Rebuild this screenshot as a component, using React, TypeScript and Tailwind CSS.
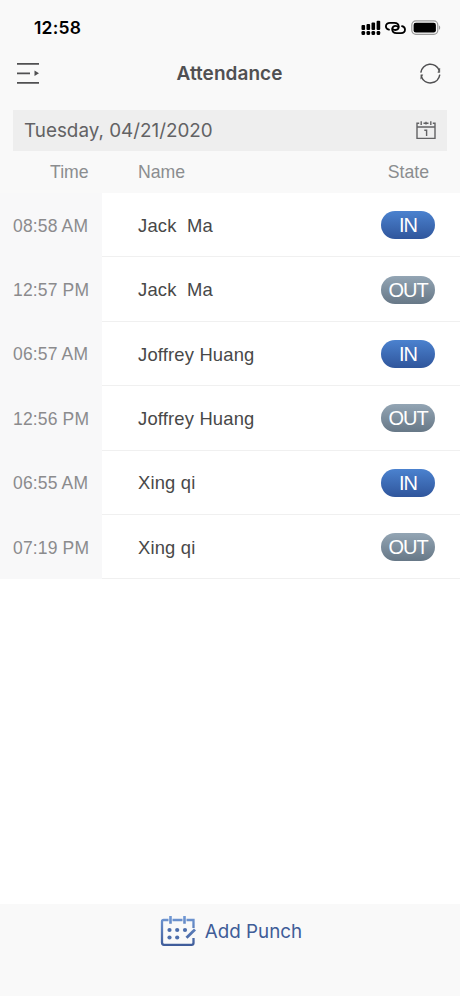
type Punch = {
  time: string;
  name: string;
  state: "IN" | "OUT";
};

const punches: Punch[] = [
  { time: "08:58 AM", name: "Jack  Ma", state: "IN" },
  { time: "12:57 PM", name: "Jack  Ma", state: "OUT" },
  { time: "06:57 AM", name: "Joffrey Huang", state: "IN" },
  { time: "12:56 PM", name: "Joffrey Huang", state: "OUT" },
  { time: "06:55 AM", name: "Xing qi", state: "IN" },
  { time: "07:19 PM", name: "Xing qi", state: "OUT" },
];

function StatusBar() {
  return (
    <div className="flex h-[48px] items-center justify-between pt-[8px] pl-[34px] pr-[19px] text-black">
      <span className="font-['Inter',sans-serif] text-[17.5px] font-semibold tracking-[0.2px]">12:58</span>
      <div className="flex items-center">
        <svg className="h-[16px] w-[20px]" viewBox="0 0 20 16" fill="currentColor">
          <rect x="0.5" y="5" width="3.6" height="5" rx="1" />
          <rect x="5.5" y="4" width="3.6" height="6" rx="1" />
          <rect x="10.5" y="2.6" width="3.6" height="7.4" rx="1" />
          <rect x="15.6" y="0.8" width="3.6" height="9.2" rx="1" />
          <rect x="0.5" y="11" width="3.6" height="4" rx="1.3" />
          <rect x="5.5" y="11" width="3.6" height="4" rx="1.3" />
          <rect x="10.5" y="11" width="3.6" height="4" rx="1.3" />
          <rect x="15.6" y="11" width="3.6" height="4" rx="1.3" />
        </svg>
        <svg className="ml-[4px] h-[16px] w-[21px]" viewBox="0 0 21 16" fill="none" stroke="currentColor" strokeWidth="1.8" strokeLinecap="round">
          <path d="M4 9.7C2 9.2 .9 7.8 .9 6.2C.9 4.1 2.7 2.8 5 2.8H9.3C11.9 2.8 13.7 4.4 13.7 6.6C13.7 8.8 12 10 10.4 10C9.1 10 8.1 9.6 7.5 8.8" />
          <path d="M17 6.2C19 6.7 20 8 20 9.6C20 11.7 18.3 13.1 16 13.1H11.6C9 13.1 7.2 11.5 7.2 9.3C7.2 7.1 8.8 5.9 10.5 5.9C11.8 5.9 12.9 6.3 13.5 7.1" />
        </svg>
        <svg className="ml-[5px] h-[16px] w-[30px]" viewBox="0 0 30 16" fill="none">
          <rect x="0.8" y="0.9" width="26" height="13.4" rx="4" stroke="#9a9a9a" strokeWidth="1.2" />
          <rect x="2.6" y="2.7" width="22.3" height="9.8" rx="2.2" fill="black" />
          <path d="M28 5.5C29.6 6 29.6 9.2 28 9.7Z" fill="#9a9a9a" />
        </svg>
      </div>
    </div>
  );
}

function NavBar() {
  return (
    <div className="flex h-[62px] items-start justify-between pt-[12px] pl-[16px] pr-[18px] text-[#505052]">
      <svg className="h-[26px] w-[24px]" viewBox="0 0 24 26" fill="none" stroke="currentColor" strokeWidth="1.8">
        <path d="M1 3.8H23M1 13.3H14M1 22.8H23" />
        <path d="M18.5 10.6L23 13.3L18.5 16Z" fill="currentColor" stroke="none" />
      </svg>
      <h1 className="pl-px font-['Inter',sans-serif] text-[19px] leading-[27px] font-semibold tracking-[0.05px]">Attendance</h1>
      <svg className="mt-[2px] h-[24px] w-[24px]" viewBox="0 0 24 24" fill="none" stroke="currentColor" strokeWidth="1.5">
        <path d="M2.8 10.6A9.6 9.6 0 0 1 21.3 8.5M21.8 12.6A9.6 9.6 0 0 1 3.4 14.9" />
        <path d="M19.8 10.5H21.8V6ZM4.8 12.7H2.8V17.2Z" fill="currentColor" strokeWidth="0.4" />
      </svg>
    </div>
  );
}

function DateBar() {
  return (
    <div className="mx-[13px] flex h-[41px] items-center justify-between bg-[#eeeeee] pl-[11px] pr-[10px] text-[#626264]">
      <span className="pt-px font-['Inter',sans-serif] text-[18.85px]">Tuesday, 04/21/2020</span>
      <svg className="mr-px h-[20px] w-[20px]" viewBox="0 0 20 20" fill="none" stroke="currentColor" strokeWidth="1.4">
        <path d="M3.2 2.3H1V17.4H19V2.3H16.8M7.5 2.3H12.5M1 6H19M5.2 0.3V4M10 0.8V3.4M14.8 0.3V4" />
        <path d="M8.3 9.2H10.6V15" />
      </svg>
    </div>
  );
}

function StateBadge({ state }: { state: Punch["state"] }) {
  const colors = state === "IN" ? "from-[#4b82cf] to-[#30569c]" : "from-[#93a5b4] to-[#677887]";
  return (
    <span className={`flex h-[28px] w-[54px] items-center justify-center rounded-full bg-linear-to-b text-[20px] tracking-[-1px] text-white ${colors}`}>
      {state}
    </span>
  );
}

function PunchRow({ punch }: { punch: Punch }) {
  return (
    <div className="flex h-[64.4px] items-stretch">
      <div className="flex w-[102px] items-center bg-[#f8f8f9] pt-px pl-[13px] text-[17.5px] tracking-[0.15px] whitespace-nowrap text-[#8b8b8d]">
        {punch.time}
      </div>
      <div className="flex flex-1 items-center justify-between border-b border-[#f0f0f0] pt-px pl-[36px] pr-[25px]">
        <span className="pt-px text-[18.4px] tracking-[0.18px] whitespace-pre text-[#484848]">{punch.name}</span>
        <StateBadge state={punch.state} />
      </div>
    </div>
  );
}

export default function App() {
  return (
    <div className="flex h-[996px] w-[460px] flex-col overflow-hidden bg-white font-['Liberation_Sans',Arial,sans-serif]">
      <header className="h-[193px] bg-[#f9f9f9]">
        <StatusBar />
        <NavBar />
        <DateBar />
        <div className="flex h-[42px] items-center text-[17.7px] text-[#8b8d8f]">
          <span className="w-[138px] pl-[50px]">Time</span>
          <span className="flex-1">Name</span>
          <span className="pr-[31px]">State</span>
        </div>
      </header>
      <main className="flex-1">
        {punches.map((punch) => (
          <PunchRow key={punch.time} punch={punch} />
        ))}
      </main>
      <footer className="flex h-[92px] items-start justify-center bg-[#f9f9f9] pt-[10px] pl-[2px]">
        <button className="flex items-center gap-[9px] text-[#405d98]">
          <svg className="h-[34px] w-[36px]" viewBox="0 0 36 34" fill="none" stroke="url(#punch)" strokeWidth="2.3">
            <defs>
              <linearGradient id="punch" gradientUnits="userSpaceOnUse" x1="0" y1="2" x2="0" y2="32">
                <stop stopColor="#7199d5" />
                <stop offset="1" stopColor="#3e5b99" />
              </linearGradient>
            </defs>
            <path d="M8.5 6H3.5Q2 6 2 7.5V28.5Q2 30.8 4 30.8H31.5Q33.5 30.8 33.5 29V24M12.5 6H22.5M26.5 6H33.5V14" />
            <path d="M10.5 2V9.7M24.5 2V9.7" strokeWidth="2.6" />
            <path d="M26.5 23.8L35 15.4" strokeWidth="2.8" />
            <g fill="#4c6eac" stroke="none">
              <circle cx="9.5" cy="16" r="2.1" />
              <circle cx="17.2" cy="16" r="2.1" />
              <circle cx="25" cy="16" r="2.1" />
              <circle cx="9.5" cy="23.5" r="2.1" />
              <circle cx="17.2" cy="23.5" r="2.1" />
            </g>
          </svg>
          <span className="pt-[2px] font-['Inter',sans-serif] text-[18.8px]">Add Punch</span>
        </button>
      </footer>
    </div>
  );
}
